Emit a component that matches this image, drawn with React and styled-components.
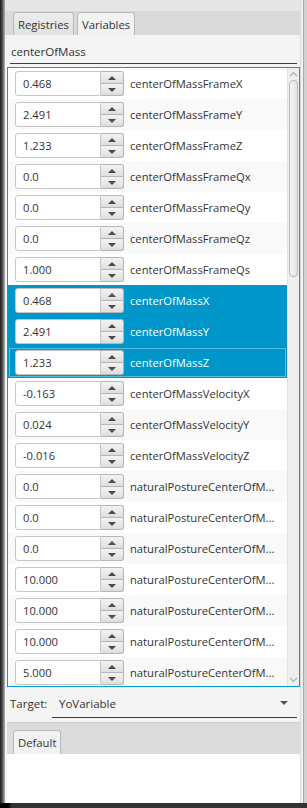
import React from 'react';
import styled, { createGlobalStyle } from 'styled-components';

const GlobalStyle = createGlobalStyle`
  html, body {
    margin: 0;
    padding: 0;
  }
  body {
    background: #f4f4f4;
    font-family: 'Open Sans', 'Noto Sans', sans-serif;
    font-size: 11.2px;
    color: #333;
  }
`;

const Window = styled.div`
  width: 307px;
  height: 808px;
  display: flex;
  flex-direction: column;
  overflow: hidden;
`;

const Body = styled.div`
  flex: 1;
  display: flex;
  min-height: 0;
`;

const LeftEdge = styled.div`
  width: 5px;
  background: linear-gradient(to right, #1c1c1c, #4c4c4c 45%, #b4b4b4);
`;

const RightEdge = styled.div`
  width: 7px;
  background: linear-gradient(
    to right,
    #d6d6d6 0 1px,
    #f2f2f2 1px 3px,
    #a9a9a9 3px 4px,
    #d0d0d0 4px
  );
`;

const BottomEdge = styled.div`
  height: 5px;
  background: linear-gradient(to right, #000 0 8px, #333 12px);
`;

const Main = styled.div`
  flex: 1;
  display: flex;
  flex-direction: column;
  background: #f4f4f4;
  min-width: 0;
`;

const TabHeader = styled.div`
  height: ${p => p.height}px;
  box-sizing: border-box;
  display: flex;
  align-items: flex-end;
  gap: 3px;
  padding-left: ${p => p.inset}px;
  background: ${p => p.bg};
`;

const Tab = styled.div`
  height: ${p => p.height}px;
  box-sizing: border-box;
  padding: 0 4px;
  display: flex;
  align-items: center;
  border: 1px solid #b9b9b9;
  border-bottom: none;
  border-radius: 3px 3px 0 0;
  background: ${p => (p.selected ? '#f2f2f2' : 'linear-gradient(#ececec, #e1e1e1)')};
  font-size: 11.3px;
  color: #333;
`;

const Content = styled.div`
  flex: 1;
  display: flex;
  flex-direction: column;
  padding-left: 2px;
  min-height: 0;
`;

const SearchField = styled.div`
  margin: 4px 3px 0 3px;
  height: 24px;
  padding-left: 1px;
  display: flex;
  align-items: center;
  border-bottom: 1px solid #3c3c3c;
  font-size: 11.5px;
`;

const List = styled.div`
  margin-top: 3px;
  height: 620px;
  box-sizing: border-box;
  border: 1px solid #039ed3;
  display: flex;
  background: #fff;
`;

const Rows = styled.div`
  flex: 1;
  overflow: hidden;
  min-width: 0;
`;

const Row = styled.div`
  height: 31px;
  box-sizing: border-box;
  display: flex;
  align-items: center;
  padding-left: 7px;
  background: ${p => (p.selected ? '#0096c9' : p.odd ? '#f9f9f9' : '#fff')};
  ${p => p.focused && 'outline: 1px solid #55bde3; outline-offset: -2px;'}
`;

const Spinner = styled.div`
  display: flex;
  height: 25px;
  flex-shrink: 0;
`;

const SpinnerField = styled.div`
  width: 86px;
  box-sizing: border-box;
  border: 1px solid #c6c6c6;
  border-radius: 3px 0 0 3px;
  background: #fff;
  padding-left: 7px;
  display: flex;
  align-items: center;
  color: #333;
`;

const SpinnerButtons = styled.div`
  width: 23px;
  display: flex;
  flex-direction: column;
`;

const ArrowButton = styled.div`
  flex: 1;
  box-sizing: border-box;
  border: 1px solid #b5b5b5;
  ${p => (p.down ? 'border-top: none;' : '')}
  border-left: none;
  border-radius: ${p => (p.down ? '0 0 3px 0' : '0 3px 0 0')};
  background: linear-gradient(#f3f3f3, #dedede);
  display: flex;
  align-items: center;
  justify-content: center;

  &::after {
    content: '';
    border-left: 4px solid transparent;
    border-right: 4px solid transparent;
    ${p => (p.down ? 'border-top' : 'border-bottom')}: 4px solid #4a4a4a;
  }
`;

const RowLabel = styled.div`
  margin-left: 6px;
  flex: 1;
  min-width: 0;
  white-space: nowrap;
  overflow: hidden;
  color: ${p => (p.selected ? '#fff' : '#333')};
`;

const ScrollBar = styled.div`
  width: 12px;
  background: #efefef;
  border-left: 1px solid #e2e2e2;
  box-sizing: border-box;
  display: flex;
  flex-direction: column;
  align-items: center;
`;

const ScrollArrow = styled.div`
  height: 12px;
  display: flex;
  align-items: center;
  justify-content: center;
`;

const Thumb = styled.div`
  width: 9px;
  height: 197px;
  box-sizing: border-box;
  border: 1px solid #b8b8b8;
  border-radius: 4px;
  background: linear-gradient(to right, #f6f6f6, #e3e3e3);
`;

const Track = styled.div`
  flex: 1;
`;

const TargetRow = styled.div`
  margin: 2px 3px 0 3px;
  display: flex;
  align-items: center;
  height: 29px;
`;

const TargetLabel = styled.div`
  width: 42px;
  font-size: 11.5px;
`;

const Combo = styled.div`
  flex: 1;
  height: 28px;
  box-sizing: border-box;
  display: flex;
  align-items: center;
  padding: 0 9px 0 7px;
  border-bottom: 1px solid #3c3c3c;
  font-size: 11.5px;

  & > span {
    flex: 1;
  }

  &::after {
    content: '';
    border-left: 4px solid transparent;
    border-right: 4px solid transparent;
    border-top: 4px solid #555;
  }
`;

const Separator = styled.div`
  margin-top: 4px;
  height: 1px;
  background: #cfcfcf;
`;

const BottomPane = styled.div`
  flex: 1;
  display: flex;
  flex-direction: column;
`;

const PaneBody = styled.div`
  flex: 1;
  background: #fff;
`;

const ChevronUp = () => (
  <svg width="9" height="6" viewBox="0 0 9 6">
    <path d="M1 5 L4.5 1.5 L8 5" fill="none" stroke="#a8a8a8" strokeWidth="1.2" />
  </svg>
);

const ChevronDown = () => (
  <svg width="9" height="6" viewBox="0 0 9 6">
    <path d="M1 1 L4.5 4.5 L8 1" fill="none" stroke="#b0b0b0" strokeWidth="1.2" />
  </svg>
);

const NP = 'naturalPostureCenterOfM...';

const variables = [
  ['0.468', 'centerOfMassFrameX'],
  ['2.491', 'centerOfMassFrameY'],
  ['1.233', 'centerOfMassFrameZ'],
  ['0.0', 'centerOfMassFrameQx'],
  ['0.0', 'centerOfMassFrameQy'],
  ['0.0', 'centerOfMassFrameQz'],
  ['1.000', 'centerOfMassFrameQs'],
  ['0.468', 'centerOfMassX', true],
  ['2.491', 'centerOfMassY', true],
  ['1.233', 'centerOfMassZ', true, true],
  ['-0.163', 'centerOfMassVelocityX'],
  ['0.024', 'centerOfMassVelocityY'],
  ['-0.016', 'centerOfMassVelocityZ'],
  ['0.0', NP],
  ['0.0', NP],
  ['0.0', NP],
  ['10.000', NP],
  ['10.000', NP],
  ['10.000', NP],
  ['5.000', NP]
];

export default function App() {
  return (
    <Window>
      <GlobalStyle />
      <Body>
        <LeftEdge />
        <Main>
          <TabHeader height={35} inset={8} bg="linear-gradient(#e6e6e6 0 11px, #dadada 11px)">
            <Tab height={23}>Registries</Tab>
            <Tab height={23} selected>
              Variables
            </Tab>
          </TabHeader>

          <Content>
            <SearchField>centerOfMass</SearchField>

            <List>
              <Rows>
                {variables.map(([value, name, selected, focused], i) => (
                  <Row key={i} odd={i % 2 === 1} selected={selected} focused={focused}>
                    <Spinner>
                      <SpinnerField>{value}</SpinnerField>
                      <SpinnerButtons>
                        <ArrowButton />
                        <ArrowButton down />
                      </SpinnerButtons>
                    </Spinner>
                    <RowLabel selected={selected}>{name}</RowLabel>
                  </Row>
                ))}
              </Rows>
              <ScrollBar>
                <ScrollArrow>
                  <ChevronUp />
                </ScrollArrow>
                <Thumb />
                <Track />
                <ScrollArrow>
                  <ChevronDown />
                </ScrollArrow>
              </ScrollBar>
            </List>

            <TargetRow>
              <TargetLabel>Target:</TargetLabel>
              <Combo>
                <span>YoVariable</span>
              </Combo>
            </TargetRow>

            <Separator />

            <BottomPane>
              <TabHeader height={31} inset={6} bg="#dcdcdc">
                <Tab height={24} selected>
                  Default
                </Tab>
              </TabHeader>
              <PaneBody />
            </BottomPane>
          </Content>
        </Main>
        <RightEdge />
      </Body>
      <BottomEdge />
    </Window>
  );
}
